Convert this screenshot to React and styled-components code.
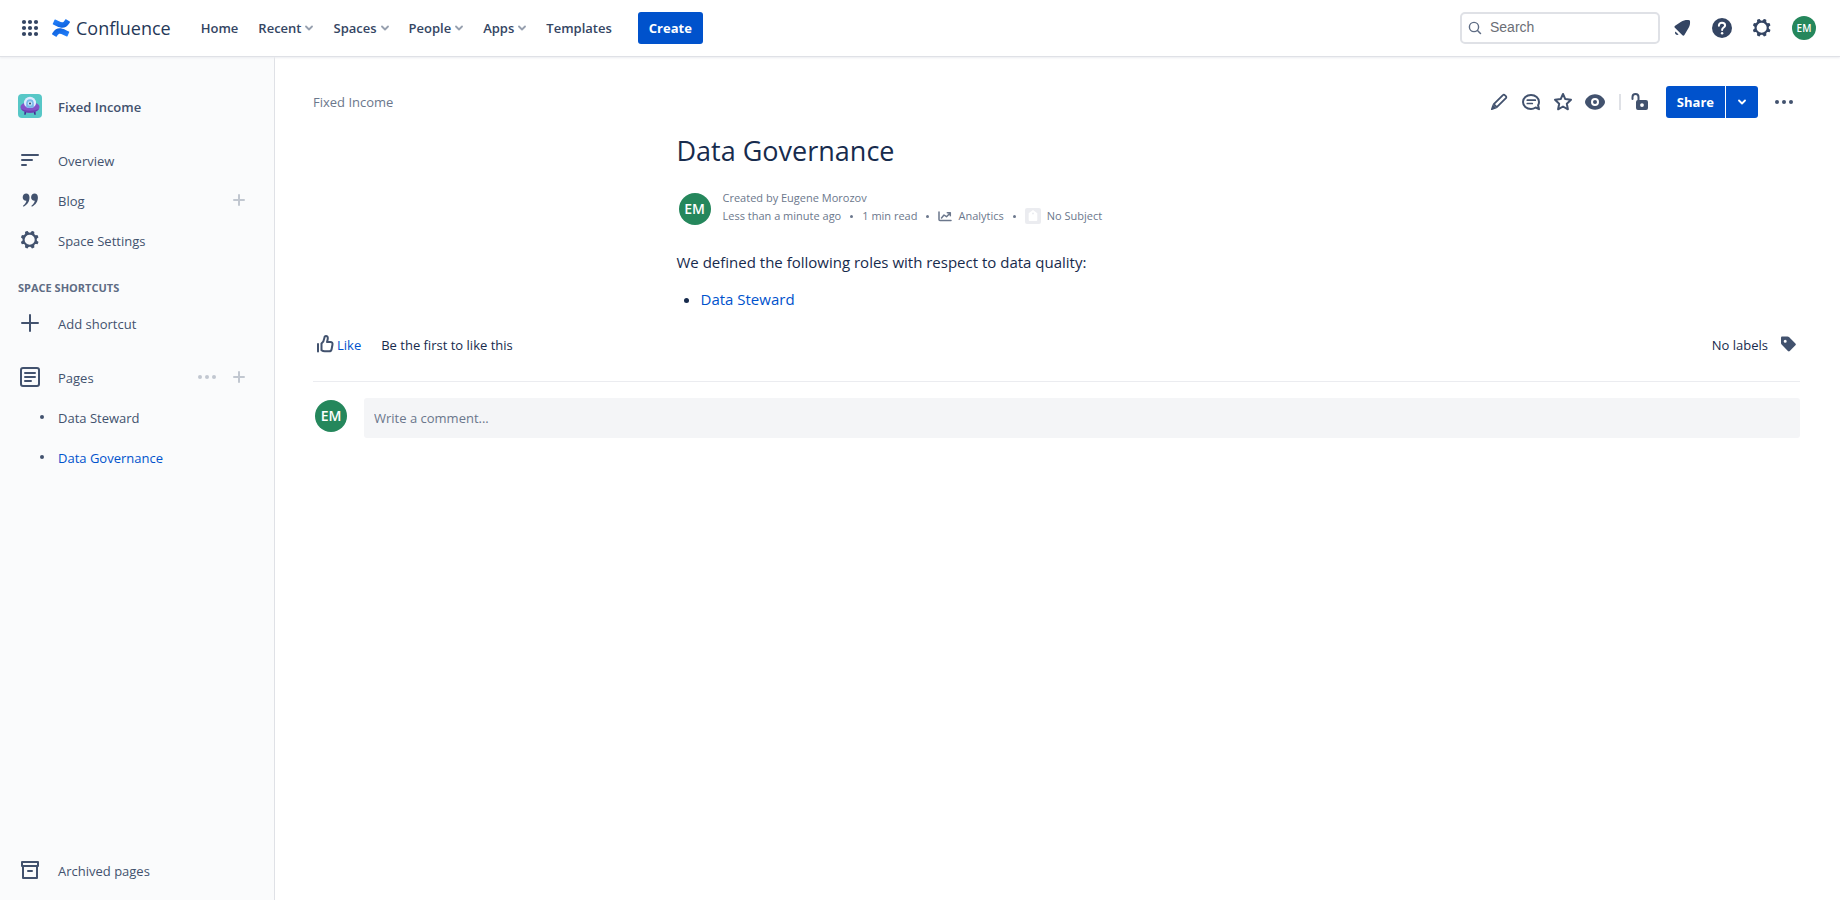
import React from "react";
import styled, { createGlobalStyle, css } from "styled-components";

const font = `"Open Sans", "Noto Sans", sans-serif`;

const Global = createGlobalStyle`
  *, *::before, *::after { box-sizing: border-box; }
  body {
    margin: 0;
    background: #fff;
    color: #172b4d;
    font-family: ${font};
    font-size: 14px;
    line-height: 20px;
  }
  a { text-decoration: none; }
  button, input { font: inherit; }
  h1, p, ul { margin: 0; padding: 0; }
`;

const Page = styled.div`
  display: flex;
  flex-direction: column;
  min-height: 100vh;
`;

const bareButton = css`
  display: inline-flex;
  align-items: center;
  justify-content: center;
  padding: 0;
  border: 0;
  background: none;
  color: inherit;
  cursor: pointer;
`;

/* Header */

const Header = styled.header`
  position: relative;
  z-index: 1;
  display: flex;
  align-items: center;
  justify-content: space-between;
  height: 56px;
  padding: 0 22px 0 18px;
  background: #fff;
  box-shadow: 0 1px 0 #dfe1e6, 0 2px 2px #ebecf0;
  color: #344563;
`;

const HeaderGroup = styled.div`
  display: flex;
  align-items: center;
`;

const IconButton = styled.button`
  ${bareButton}
  width: ${(p) => p.$size || 24}px;
  height: ${(p) => p.$size || 24}px;
`;

const Brand = styled.a`
  display: flex;
  align-items: center;
  gap: 6px;
  margin: 0 30px 0 10px;
  color: #253858;
  font-size: 18px;
  line-height: 24px;
`;

const Nav = styled.nav`
  display: flex;
  align-items: center;
  gap: 20px;
  margin-right: 26px;
`;

const NavItem = styled.button`
  ${bareButton}
  gap: 4px;
  height: 32px;
  font-size: 13px;
  font-weight: 600;
`;

const PrimaryButton = styled.button`
  ${bareButton}
  height: 32px;
  padding: 0 11px;
  border-radius: ${(p) => p.$radius || "3px"};
  background: #0052cc;
  color: #fff;
  font-size: 13px;
  font-weight: 700;
`;

const SearchBox = styled.label`
  display: flex;
  align-items: center;
  gap: 8px;
  width: 200px;
  height: 32px;
  margin-right: 10px;
  padding: 0 6px;
  border: 2px solid #dfe1e6;
  border-radius: 5px;
  color: #5e6c84;
`;

const SearchInput = styled.input`
  width: 100%;
  min-width: 0;
  padding: 0 0 2px;
  border: 0;
  outline: 0;
  background: none;
  font-family: "Liberation Sans", Arial, sans-serif;
  font-size: 14px;
  &::placeholder { color: #6b6e76; opacity: 1; }
`;

const HeaderTools = styled.div`
  display: flex;
  align-items: center;
  gap: 16px;
`;

const Avatar = styled.span`
  display: flex;
  align-items: center;
  justify-content: center;
  flex: none;
  width: ${(p) => p.$size}px;
  height: ${(p) => p.$size}px;
  border-radius: 50%;
  background: #25875c;
  color: #fff;
  font-size: ${(p) => (p.$size > 24 ? 14 : 10)}px;
  font-weight: 600;
`;

/* Sidebar */

const Body = styled.div`
  display: flex;
  flex: 1;
`;

const Sidebar = styled.aside`
  display: flex;
  flex-direction: column;
  flex: none;
  width: 275px;
  padding: 30px 18px 10px;
  border-right: 1px solid #dfe1e6;
  background: #fafbfc;
  color: #42526e;
`;

const SideRow = styled.div`
  display: flex;
  align-items: center;
  height: 40px;
  margin-top: ${(p) => p.$gap || 0}px;
`;

const SideLink = styled.a`
  display: flex;
  align-items: center;
  flex: 1;
  color: ${(p) => (p.$active ? "#0052cc" : "inherit")};
  font-size: 13px;
  font-weight: ${(p) => (p.$strong ? 600 : 400)};
`;

const SideLabel = styled.span`
  padding-top: 2px;
`;

const IconSlot = styled.span`
  display: flex;
  align-items: center;
  justify-content: center;
  flex: none;
  width: 24px;
  height: 24px;
  margin-right: 16px;
`;

const BulletSlot = styled(IconSlot)`
  justify-content: flex-end;
  width: 26px;
  margin-right: 14px;
  &::before {
    content: "";
    width: 4px;
    height: 4px;
    border-radius: 50%;
    background: #42526e;
  }
`;

const SideActions = styled.div`
  display: flex;
  gap: 8px;
  margin-right: 5px;
  color: #c1c7d0;
`;

const SideHeading = styled.h2`
  margin: 16px 0 3px;
  color: #5e6c84;
  font-size: 11px;
  font-weight: 700;
  line-height: 24px;
  text-transform: uppercase;
`;

const Spacer = styled.div`
  flex: 1;
`;

/* Content */

const Main = styled.main`
  flex: 1;
  min-width: 0;
  padding: 30px 40px 40px 38px;
`;

const PageBar = styled.div`
  display: flex;
  align-items: center;
  justify-content: space-between;
  height: 32px;
`;

const Crumb = styled.a`
  color: #6b778c;
  font-size: 13px;
`;

const PageActions = styled.div`
  display: flex;
  align-items: center;
  color: #42526e;
`;

const Divider = styled.span`
  width: 2px;
  height: 16px;
  margin: 0 3px 0 8px;
  background: #dfe1e6;
`;

const SplitButton = styled.div`
  display: flex;
  gap: 1px;
  margin: 0 10px;
`;

const CaretButton = styled(PrimaryButton)`
  width: 32px;
  padding: 0;
`;

const Article = styled.article`
  max-width: 760px;
  margin: 0 auto;
`;

const Title = styled.h1`
  margin-top: 17px;
  font-size: 27px;
  font-weight: 400;
  line-height: 32px;
`;

const Byline = styled.div`
  display: flex;
  align-items: center;
  gap: 12px;
  margin-top: 22px;
  padding-left: 2px;
  color: #6b778c;
  font-size: 11px;
  line-height: 18px;
`;

const BylineText = styled.div`
  padding-bottom: 4px;
`;

const MetaRow = styled.div`
  display: flex;
  align-items: center;
  gap: 9px;
`;

const Dot = styled.span`
  width: 3px;
  height: 3px;
  border-radius: 50%;
  background: #6b778c;
`;

const MetaButton = styled.button`
  ${bareButton}
  gap: 6px;
  height: 18px;
`;

const SubjectBadge = styled.span`
  display: flex;
  align-items: center;
  justify-content: center;
  width: 16px;
  height: 16px;
  border-radius: 2px;
  background: #ebecf0;
`;

const Paragraph = styled.p`
  margin-top: 21px;
  font-size: 15px;
  line-height: 24px;
`;

const BulletList = styled.ul`
  margin-top: 13px;
  padding-left: 24px;
  font-size: 15px;
  line-height: 24px;
  a { color: #0052cc; }
`;

const LikeRow = styled.div`
  display: flex;
  align-items: center;
  justify-content: space-between;
  height: 71px;
  padding-bottom: 3px;
  border-bottom: 1px solid #ebecf0;
  font-size: 13px;
`;

const LikeGroup = styled.div`
  display: flex;
  align-items: center;
  gap: 20px;
`;

const LikeButton = styled.button`
  ${bareButton}
  color: #0052cc;
  svg { color: #42526e; }
`;

const LabelGroup = styled.div`
  display: flex;
  align-items: center;
  gap: 8px;
  svg { color: #42526e; }
`;

const CommentRow = styled.div`
  display: flex;
  align-items: flex-start;
  gap: 17px;
  margin-top: 16px;
  padding-left: 2px;
`;

const CommentAuthor = styled.div`
  padding-top: 2px;
`;

const CommentInput = styled.input`
  flex: 1;
  min-width: 0;
  height: 40px;
  padding: 0 10px;
  border: 0;
  border-radius: 3px;
  background: #f4f5f7;
  font-size: 13px;
  &::placeholder { color: #6b778c; opacity: 1; }
`;

/* Icons */

const Icon = ({ size = 24, children, ...rest }) => (
  <svg width={size} height={size} viewBox="0 0 24 24" fill="none" aria-hidden="true" {...rest}>
    {children}
  </svg>
);

const line = { stroke: "currentColor", strokeWidth: 2, strokeLinecap: "round", strokeLinejoin: "round" };

const AppGrid = () => (
  <Icon fill="currentColor">
    {[6, 12, 18].map((y) => [6, 12, 18].map((x) => <circle key={x + "-" + y} cx={x} cy={y} r="2.1" />))}
  </Icon>
);

const Logo = () => (
  <svg width="18" height="18" viewBox="0 0 24 24" aria-hidden="true">
    <defs>
      <linearGradient id="lower" x1="1" y1="1" x2="0.2" y2="0">
        <stop offset="0" stopColor="#2684ff" />
        <stop offset="1" stopColor="#0c5fdb" />
      </linearGradient>
      <linearGradient id="upper" x1="0" y1="0" x2="0.8" y2="1">
        <stop offset="0" stopColor="#2684ff" />
        <stop offset="1" stopColor="#0c5fdb" />
      </linearGradient>
    </defs>
    <path fill="url(#lower)" d="M.87 18.257c-.248.382-.53.875-.763 1.245a.764.764 0 0 0 .255 1.04l4.965 3.054a.764.764 0 0 0 1.058-.26c.199-.332.454-.763.733-1.221 1.967-3.247 3.945-2.853 7.508-1.146l4.957 2.337a.764.764 0 0 0 1.028-.382l2.364-5.346a.764.764 0 0 0-.382-1 599.851 599.851 0 0 1-4.965-2.361C10.911 10.97 5.224 11.185.87 18.257z" />
    <path fill="url(#upper)" d="M23.131 5.743c.249-.405.531-.875.764-1.25a.764.764 0 0 0-.256-1.034L18.675.404a.764.764 0 0 0-1.058.26c-.195.335-.451.763-.734 1.225-1.966 3.246-3.945 2.85-7.508 1.146L4.437.694a.764.764 0 0 0-1.027.382L1.046 6.422a.764.764 0 0 0 .382 1c1.039.49 3.105 1.467 4.965 2.361 6.698 3.246 12.392 3.029 16.738-4.04z" />
  </svg>
);

const Chevron = ({ color = "#97a0af" }) => (
  <svg width="8" height="8" viewBox="0 0 8 8" fill="none" aria-hidden="true">
    <path d="M1 2.5 4 5.5 7 2.5" stroke={color} strokeWidth="1.8" strokeLinecap="round" strokeLinejoin="round" />
  </svg>
);

const SearchGlyph = styled.svg`
  flex: none;
`;

const SearchIcon = () => (
  <SearchGlyph width="14" height="14" viewBox="0 0 14 14" fill="none" aria-hidden="true">
    <circle cx="6" cy="6" r="4.6" stroke="currentColor" strokeWidth="1.4" />
    <path d="m9.5 9.5 3 3" stroke="currentColor" strokeWidth="1.5" strokeLinecap="round" />
  </SearchGlyph>
);

const Bell = () => (
  <Icon fill="currentColor">
    <path d="M19.2 4.2c.5 0 .8.3.8.8.2 2.3-.1 4.7-1.2 6.6l-4.4 7.4c-.5.8-1.3.9-2 .2l-7.5-7.5c-.7-.7-.6-1.5.2-2l6-4c2.3-1.4 5.3-1.8 8.100-1.5z" />
    <path d="M5.400 15.400 8.600 18.600a2.300 2.300 0 0 1-3.200-3.200z" />
  </Icon>
);

const Help = () => (
  <Icon>
    <circle cx="12" cy="12" r="10" fill="currentColor" />
    <path d="M8.9 9.7c0-1.9 1.3-3 3.1-3s3.1 1.1 3.1 2.7c0 2.1-3 2.2-3 4.5" stroke="#fff" strokeWidth="2" strokeLinecap="round" />
    <circle cx="12.1" cy="17.2" r="1.25" fill="#fff" />
  </Icon>
);

const Gear = () => (
  <Icon fill="currentColor">
    <path
      fillRule="evenodd"
      d="M11.701 16.7a5.002 5.002 0 110-10.003 5.002 5.002 0 010 10.004m8.368-3.117a1.995 1.995 0 01-1.346-1.885c0-.876.563-1.613 1.345-1.885a.48.48 0 00.315-.574 8.947 8.947 0 00-.836-1.993.477.477 0 00-.598-.195 2.04 2.04 0 01-1.29.08 1.988 1.988 0 01-1.404-1.395 2.04 2.04 0 01.076-1.297.478.478 0 00-.196-.597 8.98 8.98 0 00-1.975-.826.479.479 0 00-.574.314 1.995 1.995 0 01-1.885 1.346 1.994 1.994 0 01-1.884-1.345.482.482 0 00-.575-.315c-.708.2-1.379.485-2.004.842a.47.47 0 00-.198.582A2.002 2.002 0 014.445 7.06a.478.478 0 00-.595.196 8.946 8.946 0 00-.833 1.994.48.48 0 00.308.572 1.995 1.995 0 011.323 1.877c0 .867-.552 1.599-1.324 1.877a.479.479 0 00-.308.57 8.99 8.99 0 00.723 1.79.477.477 0 00.624.194c.595-.273 1.343-.264 2.104.238.117.077.225.185.302.3.527.8.512 1.58.198 2.188a.473.473 0 00.168.628 8.946 8.946 0 002.11.897.474.474 0 00.57-.313 1.995 1.995 0 011.886-1.353c.878 0 1.618.567 1.887 1.353a.475.475 0 00.57.313 8.964 8.964 0 002.084-.883.473.473 0 00.167-.631c-.318-.608-.337-1.393.191-2.195.077-.116.185-.225.302-.302.772-.511 1.527-.513 2.125-.23a.477.477 0 00.628-.19 8.925 8.925 0 00.728-1.793.478.478 0 00-.314-.573"
    />
  </Icon>
);

const SpaceLogo = () => (
  <Icon>
    <rect width="24" height="24" rx="4" fill="#57c7c7" />
    <path d="M6.5 17.5h2l-.8 3.2H6.2zM15.5 17.5h2l.3 3.2h-1.5z" fill="#403294" />
    <path d="M2.5 13c0-2 2-3.600 4-4h11c2 .4 4 2 4 4 0 3.200-4.400 5.800-9.500 5.800S2.500 16.200 2.500 13z" fill="#8353c8" />
    <path d="M3 14.800c1.500 2.600 5 4 9 4s7.500-1.400 9-4c-2 1.200-5 2-9 2s-7-.8-9-2z" fill="#6a3fb0" />
    <path d="M6 9a6 6.200 0 0 1 12 0c0 3-2.500 4.900-6 4.900S6 12 6 9z" fill="#deebff" />
    <path d="M8.200 9.500a3.800 4.300 0 0 1 7.600 0v3.600c-2 1.200-5.600 1.200-7.600 0z" fill="#79b8ea" />
    <circle cx="12" cy="9.500" r="2.200" fill="#c9e4fa" />
    <circle cx="12" cy="9.500" r="1" fill="#344563" />
  </Icon>
);

const Overview = () => (
  <Icon>
    <path d="M4 7h16M4 12h10M4 17h4" {...line} />
  </Icon>
);

const Quote = () => (
  <Icon fill="currentColor">
    <path d="M8.2 5.5c2 0 3.300 1.600 3.300 4 0 4-2.200 7.200-5.600 8.900-.7.300-1.200-.4-.6-.9 1.700-1.300 2.900-2.800 3.100-4.700-2.200.2-3.700-1.300-3.700-3.500 0-2.200 1.500-3.800 3.500-3.800zM16.600 5.500c2 0 3.300 1.600 3.300 4 0 4-2.200 7.200-5.600 8.900-.7.300-1.200-.4-.6-.9 1.700-1.300 2.900-2.800 3.100-4.700-2.200.2-3.700-1.300-3.700-3.500 0-2.200 1.500-3.800 3.500-3.800z" />
  </Icon>
);

const Plus = ({ reach = 8 }) => (
  <Icon>
    <path d={`M12 ${12 - reach}v${reach * 2}M${12 - reach} 12h${reach * 2}`} {...line} />
  </Icon>
);

const More = ({ r = 2, step = 7 }) => (
  <Icon fill="currentColor">
    {[12 - step, 12, 12 + step].map((x) => (
      <circle key={x} cx={x} cy="12" r={r} />
    ))}
  </Icon>
);

const PagesIcon = () => (
  <Icon>
    <rect x="3" y="3" width="18" height="18" rx="2" {...line} />
    <path d="M7 8h10M7 12h10M7 16h6" {...line} />
  </Icon>
);

const Archive = () => (
  <Icon>
    <path d="M4 4h16v4H4zM5 8v12h14V8M10 13h4" {...line} />
  </Icon>
);

const Pencil = () => (
  <Icon>
    <path d="M6.800 14.200 15.900 5.100a1.300 1.300 0 0 1 1.900 0l1.100 1.100a1.300 1.300 0 0 1 0 1.900L9.800 17.200z" {...line} strokeWidth="1.800" />
    <path d="m5.700 14.300 4 4-4.700 1.600c-.8.200-1.200-.2-1-1z" fill="currentColor" />
  </Icon>
);

const Comment = () => (
  <Icon>
    <path d="M16.600 17.500C15.300 18.400 13.700 19 12 19c-4.500 0-8-3.100-8-7s3.500-7 8-7 8 3.100 8 7c0 1.200-.3 2.300-.9 3.300L20 19.200z" {...line} />
    <path d="M8.300 10.200h8M8.300 13.500h5" {...line} strokeWidth="1.700" />
  </Icon>
);

const Star = () => (
  <Icon>
    <path d="m12 4 2.300 5.100 5.700.7-4.200 3.900 1.100 5.600-4.900-2.800-4.900 2.800 1.100-5.600L4 9.800l5.700-.7z" {...line} />
  </Icon>
);

const Eye = () => (
  <Icon>
    <path fill="currentColor" d="M12 4.200c5.500 0 10 4.600 10 7.800s-4.500 7.800-10 7.800S2 15.200 2 12s4.500-7.800 10-7.800z" />
    <circle cx="12" cy="12" r="3" stroke="#fff" strokeWidth="2" />
  </Icon>
);

const Unlock = () => (
  <Icon>
    <path d="M4.500 9V7a3 3 0 0 1 6 0v4" {...line} />
    <path fill="currentColor" fillRule="evenodd" d="M10 10h8a2 2 0 0 1 2 2v6a2 2 0 0 1-2 2h-8a2 2 0 0 1-2-2v-6a2 2 0 0 1 2-2zm4 3.200a1.900 1.900 0 1 0 0 3.800 1.900 1.900 0 0 0 0-3.800z" />
  </Icon>
);

const Chart = () => (
  <svg width="14" height="14" viewBox="0 0 14 14" fill="none" aria-hidden="true">
    <path d="M1 3v7.500a1 1 0 0 0 1 1h11" stroke="currentColor" strokeWidth="1.500" strokeLinecap="round" />
    <path d="m3.500 9 2.500-3 2.500 1.700L12 4.200M9.300 3.800H12.300v3" stroke="currentColor" strokeWidth="1.500" strokeLinecap="round" strokeLinejoin="round" />
  </svg>
);

const SubjectIcon = () => (
  <svg width="10" height="12" viewBox="0 0 10 12" aria-hidden="true">
    <path fill="#fff" fillRule="evenodd" d="m5 0 4.300 3.200V10a1 1 0 0 1-1 1H1.700a1 1 0 0 1-1-1V3.200zm0 2.600a1 1 0 1 0 0 2 1 1 0 0 0 0-2z" />
  </svg>
);

const ThumbUp = () => (
  <Icon>
    <path d="M5 11v7.500" {...line} />
    <path d="M8.500 10.500c1.800-1.600 2.600-3.400 2.900-5.700.1-1.100.7-1.800 1.600-1.800 1.200 0 1.900.9 1.800 2.400-.1 1.300-.4 2.300-.8 3.600h3.400c1.500 0 2.400 1 2.100 2.500l-.9 4.700c-.3 1.400-1 2.100-2.400 2.100h-4.500c-1.200 0-2.200-.3-3.200-1z" {...line} />
  </Icon>
);

const Tag = () => (
  <Icon fill="currentColor">
    <path fillRule="evenodd" d="M6 3.500h5.500c.6 0 1 .2 1.500.6l6.400 6.300c.6.600.6 1.300 0 1.900l-5.600 5.700c-.6.600-1.300.6-1.900 0l-6.300-6.500c-.4-.4-.6-.9-.6-1.400V5c0-.9.400-1.500 1-1.500zm3.200 3.200a1.500 1.500 0 1 0 0 3 1.500 1.500 0 0 0 0-3z" />
  </Icon>
);

/* Page */

const navItems = [
  { label: "Home" },
  { label: "Recent", menu: true },
  { label: "Spaces", menu: true },
  { label: "People", menu: true },
  { label: "Apps", menu: true },
  { label: "Templates" },
];

function TopBar() {
  return (
    <Header>
      <HeaderGroup>
        <IconButton aria-label="Switch app"><AppGrid /></IconButton>
        <Brand href="#">
          <Logo />
          Confluence
        </Brand>
        <Nav>
          {navItems.map(({ label, menu }) => (
            <NavItem key={label}>
              {label}
              {menu && <Chevron />}
            </NavItem>
          ))}
        </Nav>
        <PrimaryButton>Create</PrimaryButton>
      </HeaderGroup>
      <HeaderGroup>
        <SearchBox>
          <SearchIcon />
          <SearchInput type="text" placeholder="Search" aria-label="Search" />
        </SearchBox>
        <HeaderTools>
          <IconButton aria-label="Notifications"><Bell /></IconButton>
          <IconButton aria-label="Help"><Help /></IconButton>
          <IconButton aria-label="Settings"><Gear /></IconButton>
          <IconButton $size={28} aria-label="Your profile"><Avatar $size={24}>EM</Avatar></IconButton>
        </HeaderTools>
      </HeaderGroup>
    </Header>
  );
}

function SideItem({ icon, label, gap, strong, active, children }) {
  return (
    <SideRow $gap={gap}>
      <SideLink href="#" $strong={strong} $active={active}>
        {icon ? <IconSlot>{icon}</IconSlot> : <BulletSlot />}
        <SideLabel>{label}</SideLabel>
      </SideLink>
      {children && <SideActions>{children}</SideActions>}
    </SideRow>
  );
}

function SpaceSidebar() {
  return (
    <Sidebar>
      <SideItem icon={<SpaceLogo />} label="Fixed Income" strong />
      <SideItem icon={<Overview />} label="Overview" gap={14} />
      <SideItem icon={<Quote />} label="Blog">
        <IconButton aria-label="Create blog"><Plus reach={5} /></IconButton>
      </SideItem>
      <SideItem icon={<Gear />} label="Space Settings" />
      <SideHeading>Space shortcuts</SideHeading>
      <SideItem icon={<Plus />} label="Add shortcut" />
      <SideItem icon={<PagesIcon />} label="Pages" gap={14}>
        <IconButton aria-label="More page actions"><More /></IconButton>
        <IconButton aria-label="Create page"><Plus reach={5} /></IconButton>
      </SideItem>
      <SideItem label="Data Steward" />
      <SideItem label="Data Governance" active />
      <Spacer />
      <SideItem icon={<Archive />} label="Archived pages" />
    </Sidebar>
  );
}

export default function App() {
  return (
    <Page>
      <Global />
      <TopBar />
      <Body>
        <SpaceSidebar />
        <Main>
          <PageBar>
            <Crumb href="#">Fixed Income</Crumb>
            <PageActions>
              <IconButton $size={32} aria-label="Edit"><Pencil /></IconButton>
              <IconButton $size={32} aria-label="Comments"><Comment /></IconButton>
              <IconButton $size={32} aria-label="Star"><Star /></IconButton>
              <IconButton $size={32} aria-label="Watch"><Eye /></IconButton>
              <Divider />
              <IconButton $size={32} aria-label="Restrictions"><Unlock /></IconButton>
              <SplitButton>
                <PrimaryButton $radius="3px 0 0 3px">Share</PrimaryButton>
                <CaretButton $radius="0 3px 3px 0" aria-label="Share options"><Chevron color="#fff" /></CaretButton>
              </SplitButton>
              <IconButton $size={32} aria-label="More actions"><More /></IconButton>
            </PageActions>
          </PageBar>
          <Article>
            <Title>Data Governance</Title>
            <Byline>
              <Avatar $size={32}>EM</Avatar>
              <BylineText>
                <div>Created by Eugene Morozov</div>
                <MetaRow>
                  Less than a minute ago
                  <Dot />
                  1 min read
                  <Dot />
                  <MetaButton><Chart />Analytics</MetaButton>
                  <Dot />
                  <MetaButton><SubjectBadge><SubjectIcon /></SubjectBadge>No Subject</MetaButton>
                </MetaRow>
              </BylineText>
            </Byline>
            <Paragraph>We defined the following roles with respect to data quality:</Paragraph>
            <BulletList>
              <li><a href="#">Data Steward</a></li>
            </BulletList>
          </Article>
          <LikeRow>
            <LikeGroup>
              <LikeButton><ThumbUp />Like</LikeButton>
              <span>Be the first to like this</span>
            </LikeGroup>
            <LabelGroup>
              No labels
              <IconButton aria-label="Edit labels"><Tag /></IconButton>
            </LabelGroup>
          </LikeRow>
          <CommentRow>
            <CommentAuthor><Avatar $size={32}>EM</Avatar></CommentAuthor>
            <CommentInput type="text" placeholder="Write a comment..." aria-label="Write a comment" />
          </CommentRow>
        </Main>
      </Body>
    </Page>
  );
}
